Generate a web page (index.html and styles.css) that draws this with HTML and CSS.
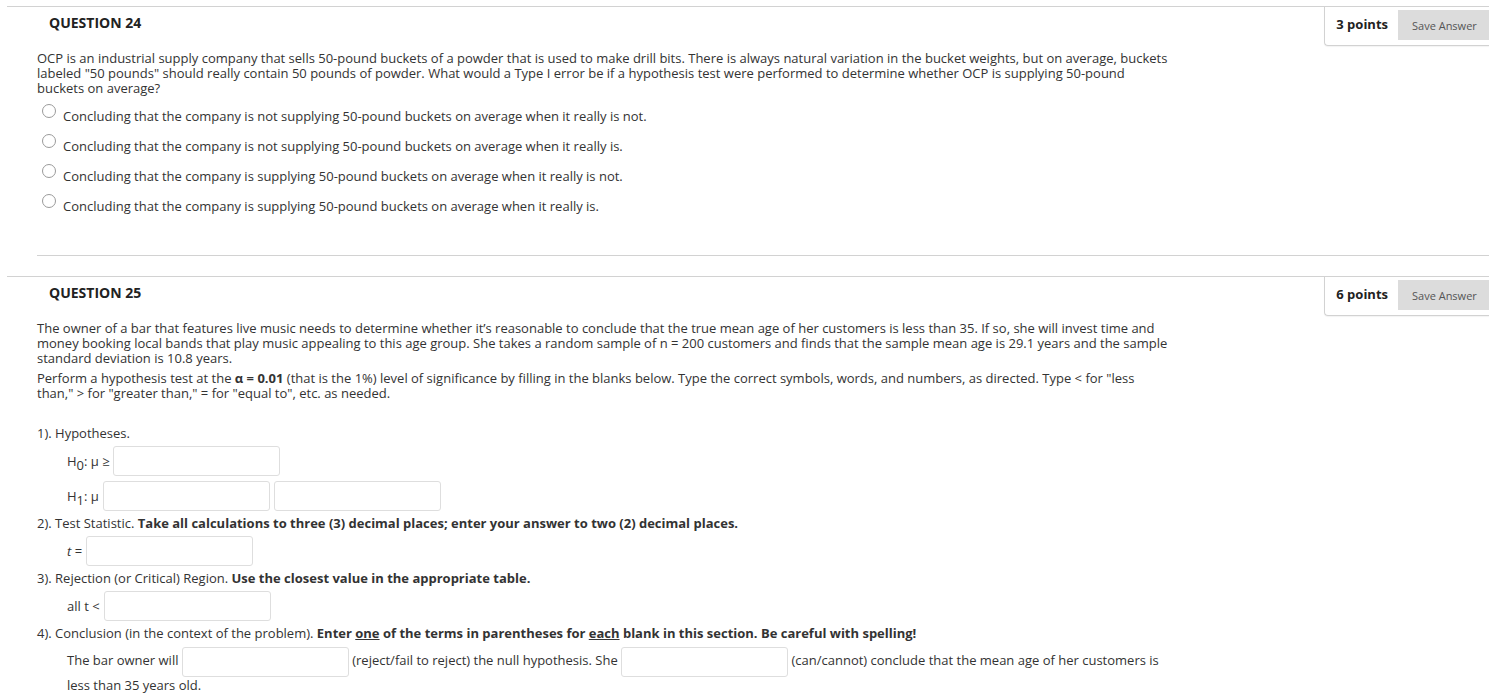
FILE: index.html
```html
<!DOCTYPE html>
<html>
<head>
<meta charset="utf-8">
<link rel="stylesheet" href="styles.css">
</head>
<body>
<ul class="questions">
  <li class="question">
    <div class="q-header">
      <h3 class="q-title">QUESTION 24</h3>
      <div class="points-box">
        <span class="points">3 points</span>
        <button class="save-btn">Save Answer</button>
      </div>
    </div>
    <div class="q-body q-body-sep">
      <p class="text">OCP is an industrial supply company that sells 50-pound buckets of a powder that is used to make drill bits. There is always natural variation in the bucket weights, but on average, buckets labeled "50 pounds" should really contain 50 pounds of powder. What would a Type I error be if a hypothesis test were performed to determine whether OCP is supplying 50-pound buckets on average?</p>
      <ul class="answers">
        <li class="answer"><span class="radio"></span><span class="answer-label">Concluding that the company is not supplying 50-pound buckets on average when it really is not.</span></li>
        <li class="answer"><span class="radio"></span><span class="answer-label">Concluding that the company is not supplying 50-pound buckets on average when it really is.</span></li>
        <li class="answer"><span class="radio"></span><span class="answer-label">Concluding that the company is supplying 50-pound buckets on average when it really is not.</span></li>
        <li class="answer"><span class="radio"></span><span class="answer-label">Concluding that the company is supplying 50-pound buckets on average when it really is.</span></li>
      </ul>
    </div>
  </li>
  <li class="question">
    <div class="q-header">
      <h3 class="q-title">QUESTION 25</h3>
      <div class="points-box">
        <span class="points">6 points</span>
        <button class="save-btn">Save Answer</button>
      </div>
    </div>
    <div class="q-body">
      <p class="text">The owner of a bar that features live music needs to determine whether it’s reasonable to conclude that the true mean age of her customers is less than 35. If so, she will invest time and money booking local bands that play music appealing to this age group. She takes a random sample of n = 200 customers and finds that the sample mean age is 29.1 years and the sample standard deviation is 10.8 years.</p>
      <p class="text">Perform a hypothesis test at the <b>α = 0.01</b> (that is the 1%) level of significance by filling in the blanks below. Type the correct symbols, words, and numbers, as directed. Type &lt; for "less than," &gt; for "greater than," = for "equal to", etc. as needed.</p>
      <p class="part-heading part-first">1). Hypotheses.</p>
      <div class="row row-h0"><span class="row-label">H<sub>0</sub>: μ ≥</span><span class="blank"></span></div>
      <div class="row row-h1"><span class="row-label">H<sub>1</sub>: μ</span><span class="blank"></span><span class="blank"></span></div>
      <p class="part-heading">2). Test Statistic. <b>Take all calculations to three (3) decimal places; enter your answer to two (2) decimal places.</b></p>
      <div class="row"><span class="row-label"><i>t</i> =</span><span class="blank"></span></div>
      <p class="part-heading">3). Rejection (or Critical) Region. <b>Use the closest value in the appropriate table.</b></p>
      <div class="row"><span class="row-label">all t &lt;</span><span class="blank"></span></div>
      <p class="part-heading">4). Conclusion (in the context of the problem). <b>Enter <u>one</u> of the terms in parentheses for <u>each</u> blank in this section. Be careful with spelling!</b></p>
      <p class="conclusion">The bar owner will <span class="blank inline"></span> (reject/fail to reject) the null hypothesis. She <span class="blank inline"></span> (can/cannot) conclude that the mean age of her customers is less than 35 years old.</p>
    </div>
  </li>
</ul>
</body>
</html>
```

FILE: styles.css
```css
html, body {
  margin: 0;
  padding: 0;
  background: #fff;
}
body {
  font-family: "Open Sans", "DejaVu Sans", sans-serif;
  font-size: 13px;
  color: #333;
}
.questions {
  list-style: none;
  margin: 0;
  padding: 6px 0 0 0;
}
.question {
  margin-left: 7px;
  border-top: 1px solid #d2d2d2;
}
.question + .question {
  margin-top: 20px;
}
.q-header {
  display: flex;
  justify-content: space-between;
  align-items: flex-start;
}
.q-title {
  margin: 0;
  padding: 7px 0 0 42px;
  font-size: 14px;
  line-height: 18px;
  font-weight: 700;
  color: #222;
}
.points-box {
  display: flex;
  align-items: center;
  padding: 3px 0 5px 11px;
  border-left: 1px solid #d2d2d2;
  border-bottom: 1px solid #d2d2d2;
  border-bottom-left-radius: 4px;
  box-shadow: 0 1px 1px rgba(0,0,0,0.05);
}
.points {
  font-weight: 700;
  color: #222;
  margin-right: 10px;
  position: relative;
  top: -1px;
}
.save-btn {
  height: 30px;
  width: 91px;
  border: 0;
  background: #dcdcdc;
  color: #555;
  font-family: "Open Sans", "DejaVu Sans", sans-serif;
  font-size: 11px;
  text-align: left;
  padding: 0 0 0 14px;
}
.q-body {
  margin-left: 30px;
  padding-top: 5px;
}
.q-body-sep {
  border-bottom: 1px solid #d2d2d2;
  padding-bottom: 34px;
}
.text {
  margin: 0 0 5px 0;
  width: 1135px;
  line-height: 15px;
}
.answers {
  list-style: none;
  margin: 0;
  padding: 0;
}
.answer {
  display: flex;
  align-items: flex-start;
  height: 30px;
  padding-left: 5px;
}
.radio {
  flex: none;
  width: 12px;
  height: 12px;
  margin-top: 3px;
  margin-right: 7px;
  border: 1px solid #9a9a9a;
  border-radius: 50%;
  background: #fff;
}
.answer-label {
  padding-top: 6px;
  line-height: 18px;
}
.part-heading {
  margin: 3px 0 4px 0;
  line-height: 18px;
}
.part-first {
  margin-top: 23px;
}
.row {
  display: flex;
  align-items: center;
  gap: 4px;
  height: 30px;
  padding-left: 30px;
}
.row-h0 {
  gap: 3px;
}
.row-h1 {
  margin-top: 5px;
}
.row-label sub {
  font-size: 13px;
  vertical-align: -4px;
  line-height: 0;
}
.blank {
  display: inline-block;
  width: 165px;
  height: 28px;
  border: 1px solid #dedede;
  border-radius: 3px;
  background: #fff;
}
.blank.inline {
  vertical-align: middle;
  margin: -4px 0;
}
.conclusion {
  margin: 6px 0 0 0;
  padding-left: 30px;
  width: 1100px;
  line-height: 24px;
}
```
